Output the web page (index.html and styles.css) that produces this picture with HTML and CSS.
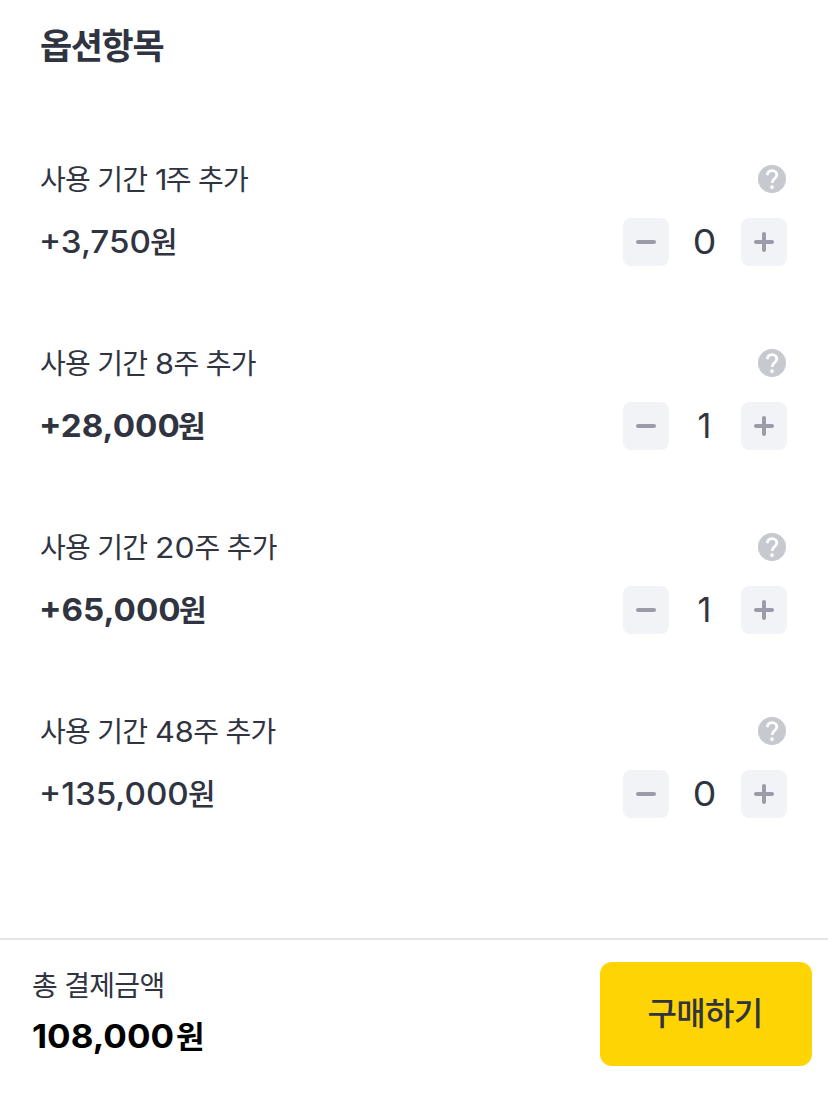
FILE: index.html
```html
<!DOCTYPE html>
<html lang="ko">
<head>
  <meta charset="UTF-8">
  <meta name="viewport" content="width=device-width, initial-scale=1.0">
  <title>옵션항목</title>
  <link rel="stylesheet" href="styles.css">
</head>
<body>
  <svg width="0" height="0" class="symbols">
    <symbol id="icon-help" viewBox="0 0 28 28">
      <circle cx="14" cy="14" r="14" fill="#c7c9d1"/>
      <path d="M9.300 10.300C9.300 7.300 11.400 5.600 14 5.600c2.700 0 4.800 1.800 4.800 4.300 0 3.500-4.700 4-4.700 8.200" fill="none" stroke="#fff" stroke-width="2.800"/>
      <rect x="12.400" y="20.600" width="3.200" height="3.200" rx=".6" fill="#fff"/>
    </symbol>
    <symbol id="icon-minus" viewBox="0 0 20 20">
      <path d="M2 10h16" stroke="#9b9ba9" stroke-width="4" stroke-linecap="round"/>
    </symbol>
    <symbol id="icon-plus" viewBox="0 0 20 20">
      <path d="M2 10h16M10 2v16" stroke="#9b9ba9" stroke-width="4" stroke-linecap="round"/>
    </symbol>
  </svg>

  <main class="options">
    <h1>옵션항목</h1>
    <div class="option">
      <div class="option-row">
        <span class="option-name">사용 기간 <span class="num one">1</span>주 추가</span>
        <svg class="help"><use href="#icon-help"/></svg>
      </div>
      <div class="option-row">
        <span class="price"><span class="price-num w-3750">+3,750</span>원</span>
        <div class="stepper">
          <button><svg><use href="#icon-minus"/></svg></button>
          <span class="count zero">0</span>
          <button><svg><use href="#icon-plus"/></svg></button>
        </div>
      </div>
    </div>
    <div class="option">
      <div class="option-row">
        <span class="option-name">사용 기간 <span class="num">8</span>주 추가</span>
        <svg class="help"><use href="#icon-help"/></svg>
      </div>
      <div class="option-row">
        <span class="price selected"><span class="price-num w-28000">+28,000</span>원</span>
        <div class="stepper">
          <button><svg><use href="#icon-minus"/></svg></button>
          <span class="count">1</span>
          <button><svg><use href="#icon-plus"/></svg></button>
        </div>
      </div>
    </div>
    <div class="option">
      <div class="option-row">
        <span class="option-name">사용 기간 <span class="num wide">20</span>주 추가</span>
        <svg class="help"><use href="#icon-help"/></svg>
      </div>
      <div class="option-row">
        <span class="price selected"><span class="price-num w-65000">+65,000</span>원</span>
        <div class="stepper">
          <button><svg><use href="#icon-minus"/></svg></button>
          <span class="count">1</span>
          <button><svg><use href="#icon-plus"/></svg></button>
        </div>
      </div>
    </div>
    <div class="option">
      <div class="option-row">
        <span class="option-name">사용 기간 <span class="num two-digits">48</span>주 추가</span>
        <svg class="help"><use href="#icon-help"/></svg>
      </div>
      <div class="option-row">
        <span class="price"><span class="price-num w-135000">+135,000</span>원</span>
        <div class="stepper">
          <button><svg><use href="#icon-minus"/></svg></button>
          <span class="count zero">0</span>
          <button><svg><use href="#icon-plus"/></svg></button>
        </div>
      </div>
    </div>
  </main>

  <footer class="buy-bar">
    <div class="total">
      <span class="total-label">총 결제금액</span>
      <span class="total-price"><span class="price-num w-total">108,000</span>원</span>
    </div>
    <button class="buy">구매하기</button>
  </footer>
</body>
</html>
```
FILE: styles.css
```css
* {
  box-sizing: border-box;
}
body {
  margin: 0;
  height: 1104px;
  display: flex;
  flex-direction: column;
  background-color: #fff;
  color: #303441;
  font-family: "Noto Sans CJK KR", sans-serif;
}
button {
  border: 0;
  padding: 0;
  color: inherit;
  font-family: inherit;
}
.symbols {
  display: none;
}
.options {
  height: 938px;
  padding: 20px 41px 0 40px;
}
h1 {
  margin: 0 0 97px;
  font-size: 35px;
  line-height: 48px;
  font-weight: bold;
  letter-spacing: -1.4px;
}
.option {
  display: flex;
  flex-direction: column;
  gap: 25px;
  margin-bottom: 83px;
}
.option-row {
  display: flex;
  justify-content: space-between;
  align-items: center;
}
.option-name {
  height: 28px;
  font-size: 28px;
  line-height: 26px;
  letter-spacing: -0.7px;
  white-space: nowrap;
}
.num {
  display: inline-block;
  margin-right: 1px;
  font-family: Inter, sans-serif;
  font-size: 29px;
  line-height: 20px;
  letter-spacing: 0;
  transform: scaleX(1.06);
  transform-origin: left;
}
.one {
  margin-right: 0;
  letter-spacing: -0.5px;
}
.two-digits {
  margin-right: 2px;
}
.wide {
  margin-right: 4px;
  transform: scaleX(1.1);
}
.help {
  width: 28px;
  height: 28px;
  margin-right: 1px;
}
.price {
  height: 48px;
  display: flex;
  align-items: baseline;
  font-size: 30px;
  line-height: 45px;
  font-weight: 500;
}
.selected {
  font-weight: bold;
}
.price-num {
  font-family: Inter, sans-serif;
  font-size: 31px;
  transform: translateX(-1px) scaleX(1.07);
  transform-origin: left;
}
/* the stretched digits need their drawn width reserved */
.w-3750 { width: 110px; }
.w-28000 { width: 138px; }
.w-65000 { width: 139px; }
.w-135000 { width: 148px; }
.w-total { width: 144px; }
.stepper {
  display: flex;
}
.stepper button {
  width: 46px;
  height: 48px;
  display: flex;
  align-items: center;
  justify-content: center;
  border-radius: 8px;
  background-color: #f2f3f7;
}
.stepper svg {
  width: 20px;
  height: 20px;
}
.count {
  width: 72px;
  padding-right: 1px;
  text-align: center;
  font-family: Inter, sans-serif;
  font-size: 34px;
  line-height: 47px;
}
.zero {
  transform: scaleX(1.1);
}
.buy-bar {
  height: 166px;
  display: flex;
  justify-content: space-between;
  align-items: flex-start;
  padding: 22px 16px 0 32px;
  border-top: 2px solid #e5e4ec;
}
.total {
  display: flex;
  flex-direction: column;
}
.total-label {
  font-size: 28px;
  line-height: 44px;
  letter-spacing: -0.7px;
}
.total-price {
  display: flex;
  align-items: baseline;
  font-size: 31px;
  line-height: 58px;
  font-weight: bold;
  color: #000;
}
.total-price .price-num {
  font-size: 33px;
  transform: scaleX(1.06);
}
.buy {
  width: 212px;
  height: 104px;
  padding: 0 2px 7px 0;
  border-radius: 12px;
  background-color: #ffd404;
  font-size: 32px;
  font-weight: 500;
  letter-spacing: -0.7px;
}
```
